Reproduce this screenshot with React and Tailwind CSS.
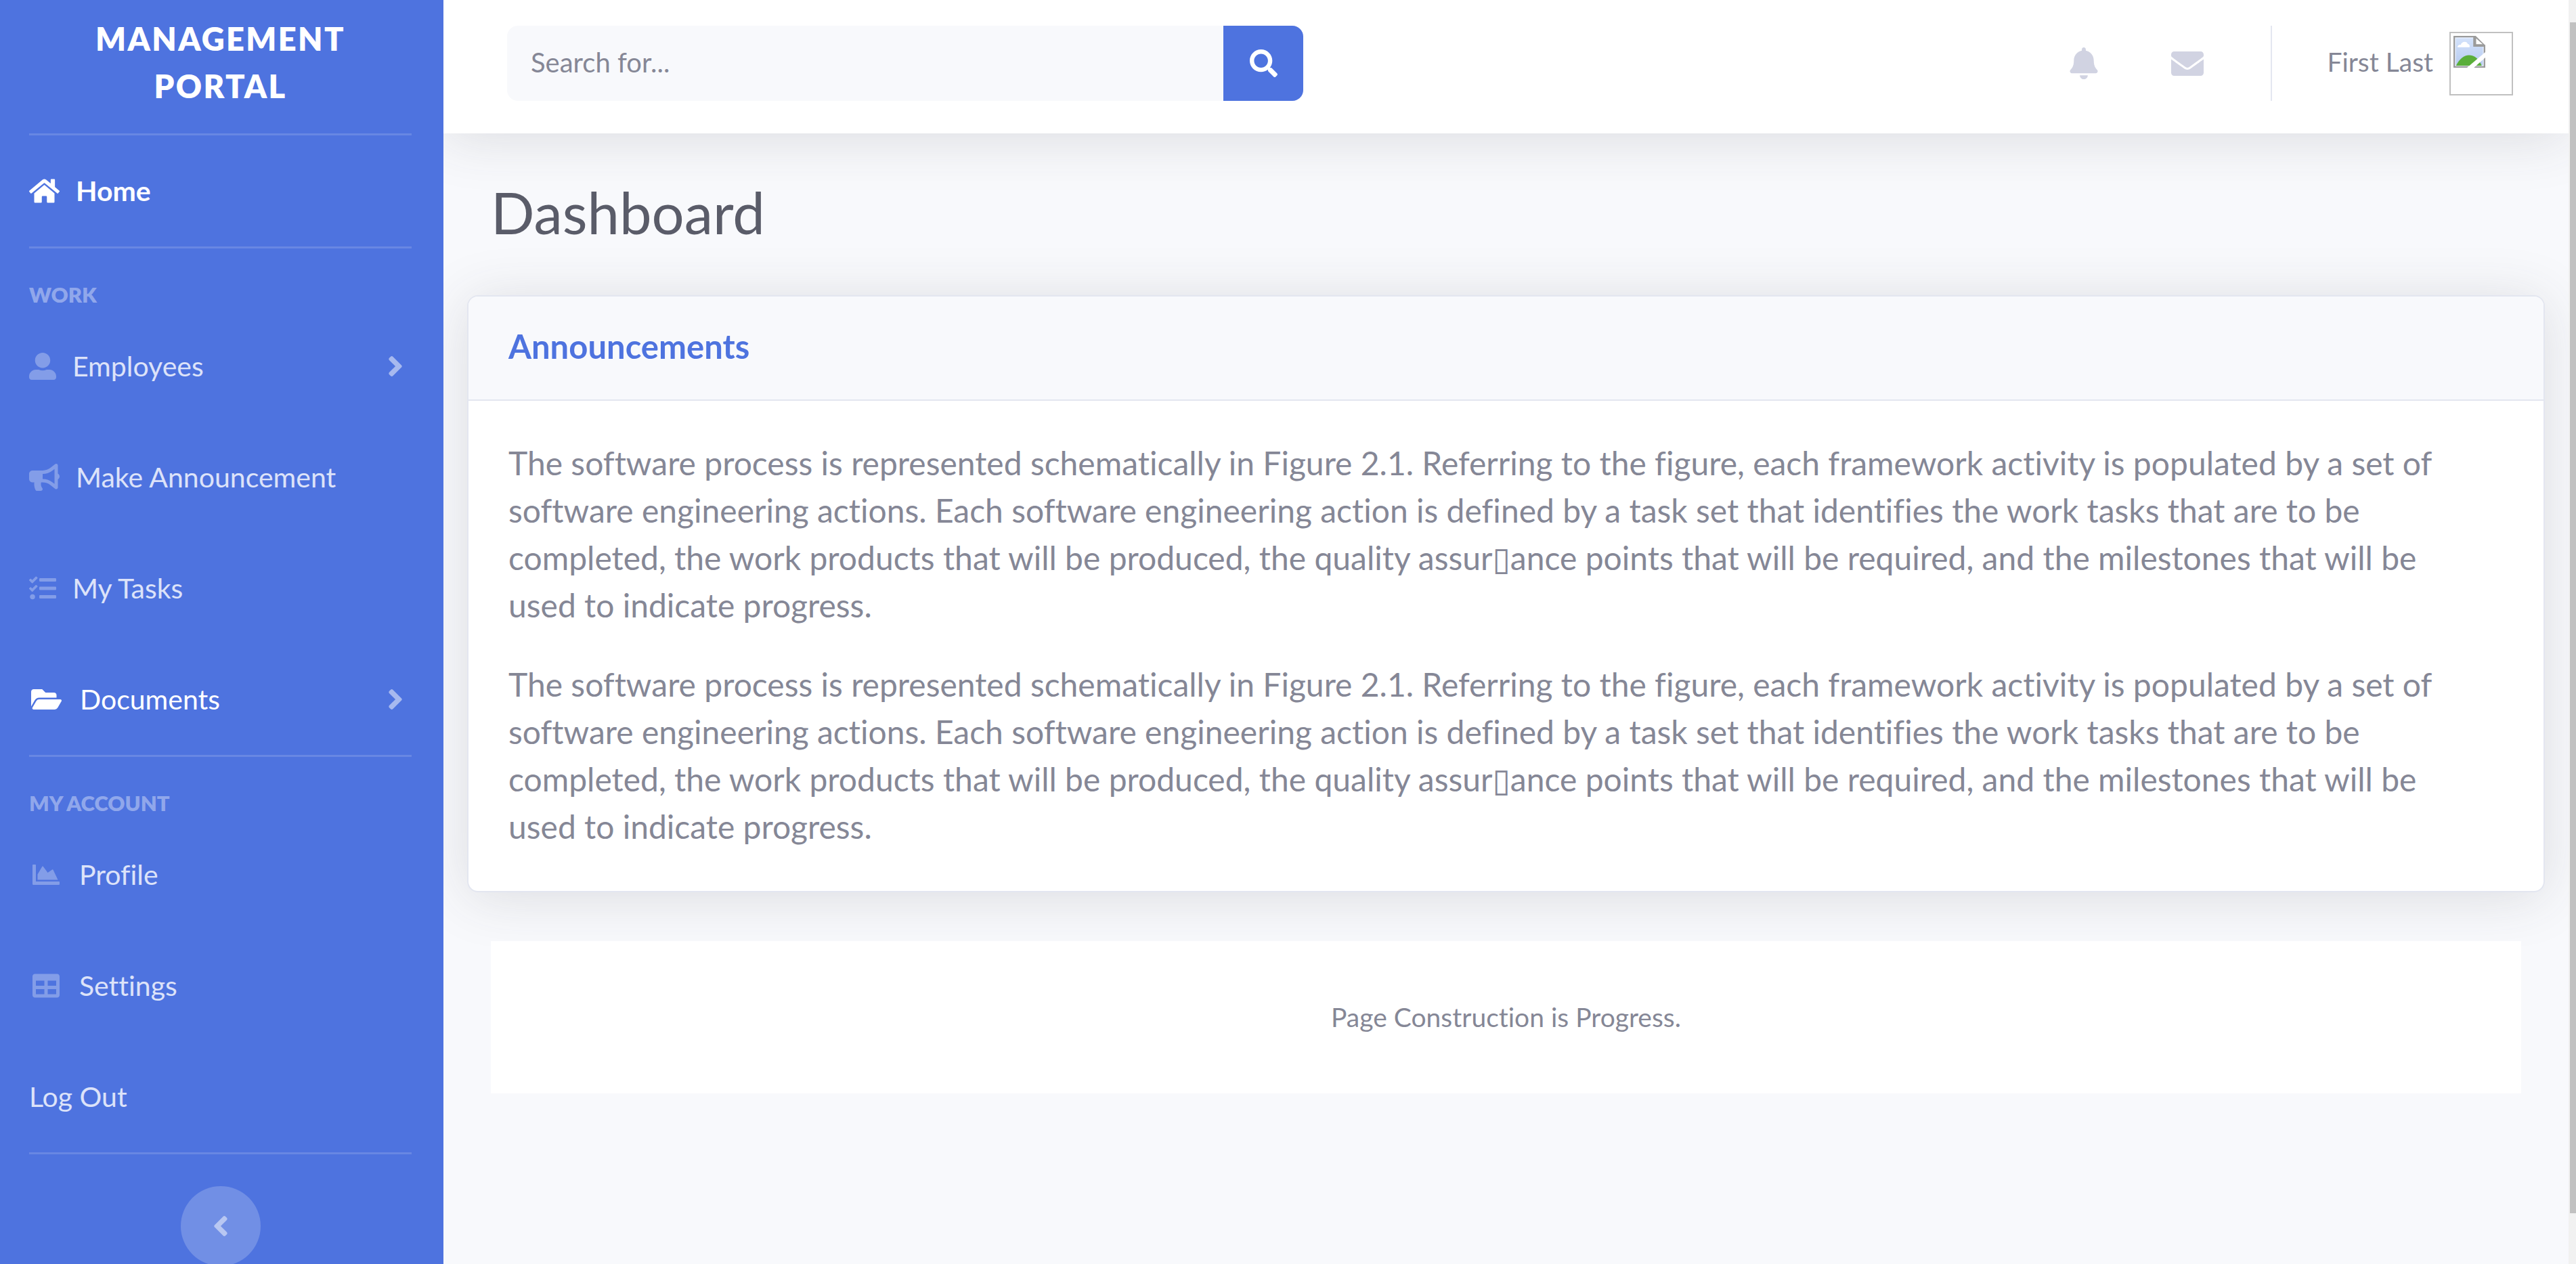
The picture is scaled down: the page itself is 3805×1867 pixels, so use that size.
import React from "react";
import {
  FaHome,
  FaUserAlt,
  FaBullhorn,
  FaTasks,
  FaFolderOpen,
  FaChartArea,
  FaTable,
  FaAngleRight,
  FaAngleLeft,
  FaSearch,
  FaBell,
  FaEnvelope,
} from "react-icons/fa";

function Divider() {
  return <hr className="mx-[43px] h-[3px] border-0 bg-white/15" />;
}

function NavHeading({ children }) {
  return (
    <h2 className="px-[43px] pt-11 text-[31px] leading-[48px] font-extrabold text-white/40 uppercase">
      {children}
    </h2>
  );
}

function NavItem({ icon, label, active = false, bold = false, expandable = false }) {
  return (
    <li>
      <a
        href="#"
        className={
          "flex items-center gap-6 py-[47px] pr-[55px] pl-[43px] text-[41px] leading-[70px] " +
          (active ? "text-white " : "text-white/80 ") +
          (bold ? "font-bold" : "font-normal")
        }
      >
        {icon && (
          <span className={active ? "text-white" : "text-white/30"}>{icon}</span>
        )}
        <span className="flex-1">{label}</span>
        {expandable && (
          <FaAngleRight className="h-[48px] w-[24px] text-white/50" aria-hidden="true" />
        )}
      </a>
    </li>
  );
}

function Sidebar() {
  return (
    <aside className="w-[655px] shrink-0 bg-[#4e73df] pr-1 text-white">
      <a
        href="#"
        className="block px-[43px] pt-[22px] pb-[35px] text-center text-[47px] leading-[70px] font-extrabold tracking-wider uppercase"
      >
        Management
        <br />
        Portal
      </a>
      <Divider />
      <nav>
        <ul>
          <NavItem
            icon={<FaHome className="h-[40px] w-[45px]" />}
            label="Home"
            active
            bold
          />
        </ul>
        <Divider />
        <NavHeading>Work</NavHeading>
        <ul>
          <NavItem
            icon={<FaUserAlt className="size-[40px]" />}
            label="Employees"
            expandable
          />
          <NavItem
            icon={<FaBullhorn className="h-[40px] w-[45px]" />}
            label="Make Announcement"
          />
          <NavItem icon={<FaTasks className="size-[40px]" />} label="My Tasks" />
          <NavItem
            icon={<FaFolderOpen className="mx-[3px] h-[40px] w-[45px]" />}
            label="Documents"
            active
            expandable
          />
        </ul>
        <Divider />
        <NavHeading>My Account</NavHeading>
        <ul>
          <NavItem
            icon={<FaChartArea className="mx-[5px] size-[40px]" />}
            label="Profile"
          />
          <NavItem
            icon={<FaTable className="mx-[5px] size-[40px]" />}
            label="Settings"
          />
          <NavItem label="Log Out" />
        </ul>
      </nav>
      <Divider />
      <div className="mt-[47px] flex justify-center">
        <button
          type="button"
          aria-label="Collapse sidebar"
          className="flex size-[118px] items-center justify-center rounded-full bg-white/20"
        >
          <FaAngleLeft className="h-[48px] w-[24px] text-white/50" />
        </button>
      </div>
    </aside>
  );
}

function MissingPhoto() {
  return (
    <span className="flex size-[94px] items-start border-2 border-[#c0c0c0] p-1">
      <svg viewBox="0 0 16 16" className="size-[47px]" role="img" aria-label="Profile photo">
        <defs>
          <linearGradient id="sky" x1="0" y1="0" x2="0" y2="1">
            <stop offset="0" stopColor="#d3e2fb" />
            <stop offset="1" stopColor="#b7cbf0" />
          </linearGradient>
        </defs>
        <path d="M0 0H11.2L16 4.8V16H0Z" fill="#9b9b9b" />
        <path d="M1 1H10.3V5H15V15H1Z" fill="url(#sky)" stroke="#edf3ff" strokeWidth=".4" />
        <path d="M2 5.700C2 4.800 3 4.300 3.700 4.500C4 2.600 6.900 2.400 7.200 4.100C8 4.100 8.300 5 8.100 5.700Z" fill="#fff" />
        <path d="M1.300 15C3 11.500 5.300 9.700 7.800 9.700C10.600 9.700 12.800 11.500 14.200 15Z" fill="#5aae3a" />
        <path d="M11.400 1.300L14.700 4.200H11.400Z" fill="#fff" />
        <path d="M10.400 0V5H16" fill="none" stroke="#9b9b9b" strokeWidth=".9" />
        <path d="M16 8.200L6.800 16H10.300L16 10.900Z" fill="#fff" />
      </svg>
    </span>
  );
}

function Topbar() {
  return (
    <header className="relative z-10 flex items-center bg-white pt-[38px] pr-[82px] pb-12 pl-[94px] text-[#858796] shadow-[0_7px_82px_0_rgba(58,59,69,0.15)]">
      <form className="flex h-[111px] w-full max-w-[1176px]" role="search">
        <input
          type="text"
          aria-label="Search for..."
          placeholder="Search for..."
          className="min-w-0 flex-1 rounded-l-[16px] bg-[#f8f9fc] px-[35px] pb-1 text-[40px] outline-none placeholder:text-[#858796]"
        />
        <button
          type="button"
          aria-label="Search"
          className="flex w-[118px] items-center justify-center rounded-r-[16px] bg-[#4e73df] text-white"
        >
          <FaSearch className="size-[41px]" />
        </button>
      </form>
      <div className="ml-auto flex h-[111px] items-center">
        <button
          type="button"
          aria-label="Notifications"
          className="flex w-[153px] justify-center text-[#d1d3e2]"
        >
          <FaBell className="h-[47px] w-[42px]" />
        </button>
        <button
          type="button"
          aria-label="Messages"
          className="flex w-[153px] justify-center text-[#d1d3e2]"
        >
          <FaEnvelope className="size-[48px]" />
        </button>
        <div className="mr-[81px] ml-[47px] h-full w-[2px] bg-[#e3e6f0]" />
        <a href="#" className="flex items-center gap-6">
          <span className="pb-1 text-[39px]">First Last</span>
          <MissingPhoto />
        </a>
      </div>
    </header>
  );
}

function Announcement() {
  return (
    <p>
      The software process is represented schematically in Figure 2.1. Referring to the figure,
      each framework activity is populated by a set of software engineering actions. Each software
      engineering action is defined by a task set that identifies the work tasks that are to be
      completed, the work products that will be produced, the quality assur▯ance points that will
      be required, and the milestones that will be used to indicate progress.
    </p>
  );
}

function Scrollbar() {
  return (
    <div
      aria-hidden="true"
      className="flex w-[11px] shrink-0 flex-col bg-[#f1f1f1] pt-[33px] pb-[75px] pl-[2px]"
    >
      <div className="flex-1 bg-[#c1c1c1]" />
    </div>
  );
}

export default function App() {
  return (
    <div className="flex h-screen overflow-hidden bg-[#f8f9fc] font-['Lato','DejaVu_Sans',sans-serif] [font-variant-ligatures:no-common-ligatures]">
      <Sidebar />
      <div className="min-w-0 flex-1 overflow-hidden">
        <Topbar />
        <main className="px-[35px] pt-[71px] text-[#858796]">
          <h1 className="mb-[78px] px-[35px] text-[85px] leading-[90px] text-[#5a5c69]">
            Dashboard
          </h1>
          <section className="rounded-[16px] border-2 border-[#e3e6f0] bg-white shadow-[0_7px_82px_0_rgba(58,59,69,0.15)]">
            <h2 className="rounded-t-[14px] border-b-2 border-[#e3e6f0] bg-[#f8f9fc] px-[59px] pt-[38px] pb-[44px] text-[49px] leading-[70px] font-bold text-[#4e73df]">
              Announcements
            </h2>
            <div className="flex flex-col gap-[47px] pt-[57px] pr-[120px] pb-[60px] pl-[59px] text-[48px] leading-[70px]">
              <Announcement />
              <Announcement />
            </div>
          </section>
          <footer className="relative mx-[35px] mt-[72px] bg-white py-[84px] text-center text-[39px] leading-[57px]">
            Page Construction is Progress.
          </footer>
        </main>
      </div>
      <Scrollbar />
    </div>
  );
}
